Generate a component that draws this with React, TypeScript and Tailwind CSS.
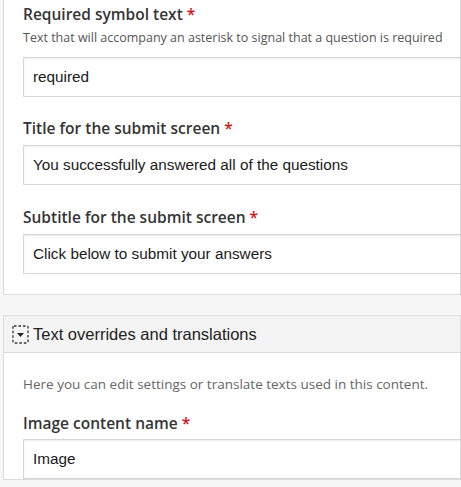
const labelFont = { fontFamily: '"Open Sans", "Noto Sans", sans-serif' }

function Label({ text }: { text: string }) {
  return (
    <div
      className="text-[15.5px] font-semibold text-[#353535] leading-[20px]"
      style={labelFont}
    >
      {text} <span className="text-[#d0131a]">*</span>
    </div>
  )
}

function TextInput({ value }: { value: string }) {
  return (
    <div className="h-[40px] -mr-[40px] bg-white border border-[#d6d6d6] shadow-[inset_0_1px_2px_rgba(0,0,0,0.08)] flex items-center px-[9px] text-[15.3px] text-[#1a1a1a] font-['Liberation_Sans',Arial,sans-serif]">
      {value}
    </div>
  )
}

function CollapseIcon() {
  return (
    <svg width="17" height="19" viewBox="0 0 17 19" className="shrink-0">
      <rect
        x="1"
        y="1"
        width="15"
        height="17"
        rx="1"
        fill="none"
        stroke="#333"
        strokeWidth="1.3"
        strokeDasharray="2.5 2"
      />
      <path d="M5 8 L12 8 L8.5 12 Z" fill="#222" />
    </svg>
  )
}

export default function App() {
  return (
    <div className="min-h-screen w-[461px] h-[487px] overflow-hidden bg-[#f7f7f7]">

      {/* FIRST GROUP */}
      <div className="ml-[3px] -mt-[1px] bg-white border border-[#dcdcdc] pl-[19px] pb-[20px] overflow-hidden">

        <div className="pt-[4px]">
          <Label text="Required symbol text" />
          <p
            className="text-[12.5px] text-[#555] mt-[6px] leading-[16px] whitespace-nowrap"
            style={labelFont}
          >
            Text that will accompany an asterisk to signal that a question is required
          </p>
          <div className="mt-[11px]">
            <TextInput value="required" />
          </div>
        </div>

        <div className="mt-[21px]">
          <Label text="Title for the submit screen" />
          <div className="mt-[7px]">
            <TextInput value="You successfully answered all of the questions" />
          </div>
        </div>

        <div className="mt-[22px]">
          <Label text="Subtitle for the submit screen" />
          <div className="mt-[7px]">
            <TextInput value="Click below to submit your answers" />
          </div>
        </div>

      </div>

      {/* TEXT OVERRIDES */}
      <div className="ml-[3px] mt-[20px] bg-white border border-[#dcdcdc] overflow-hidden">

        <div className="h-[37px] bg-[#f4f4f4] border-b border-[#dcdcdc] flex items-center gap-[4px] pl-[8px] text-[16.5px] text-[#222] font-['Liberation_Sans',Arial,sans-serif]">
          <CollapseIcon />
          <span>Text overrides and translations</span>
        </div>

        <div className="pl-[19px] pt-[22px]">
          <p
            className="text-[13.5px] text-[#666] leading-[18px] whitespace-nowrap"
            style={labelFont}
          >
            Here you can edit settings or translate texts used in this content.
          </p>

          <div className="mt-[20px]">
            <Label text="Image content name" />
            <div className="mt-[6px]">
              <TextInput value="Image" />
            </div>
          </div>
        </div>

      </div>

    </div>
  )
}
